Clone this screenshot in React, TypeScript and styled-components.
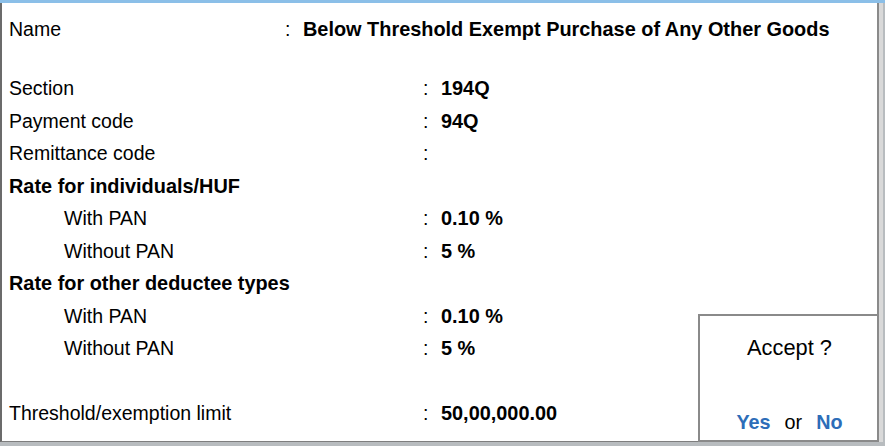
import styled, { createGlobalStyle } from "styled-components";

const GlobalStyle = createGlobalStyle`
  html, body {
    margin: 0;
    padding: 0;
    background: #b8bcbf;
  }
  body {
    font-family: "Liberation Sans", Arial, sans-serif;
    color: #000;
  }
`;

const Screen = styled.div`
  width: 885px;
  height: 446px;
  display: flex;
  flex-direction: column;
  overflow: hidden;
  background: #b8bcbf;
`;

const TitleStrip = styled.div`
  height: 3px;
  background: #8bbfe8;
  flex-shrink: 0;
`;

const Body = styled.div`
  display: flex;
  height: 439px;
`;

const Panel = styled.div`
  position: relative;
  width: 879px;
  background: #fff;
  border-left: 2px solid #6b6b6b;
  border-right: 2px solid #8a8a8a;
  border-bottom: 1px solid #7e7e7e;
  padding: 10px 0 0 7px;
  box-sizing: border-box;
`;

const ScrollEdge = styled.div`
  width: 4px;
  background: #d9d9d9;
`;

const Header = styled.div`
  margin-bottom: 27px;
`;

const Row = styled.div<{ $indent?: boolean }>`
  display: flex;
  align-items: center;
  height: 32.5px;
  font-size: 19.5px;
  padding-left: ${(p) => (p.$indent ? "55px" : "0")};
`;

const Label = styled.span<{ $width: number; $bold?: boolean }>`
  width: ${(p) => p.$width}px;
  flex-shrink: 0;
  font-weight: ${(p) => (p.$bold ? 700 : 400)};
  font-size: ${(p) => (p.$bold ? "19.9px" : "19.5px")};
`;

const Colon = styled.span`
  width: 18px;
  flex-shrink: 0;
`;

const Value = styled.span`
  font-weight: 700;
  font-size: 19.9px;
  white-space: nowrap;
`;

const Spacer = styled.div`
  height: 32.5px;
`;

const AcceptBox = styled.div`
  position: absolute;
  right: -2px;
  bottom: -1px;
  width: 181px;
  height: 128px;
  box-sizing: border-box;
  background: #fff;
  border: 2px solid #8a8a8a;
  display: flex;
  flex-direction: column;
  align-items: center;
  justify-content: space-between;
  padding: 19px 0 6px 2px;
`;

const AcceptTitle = styled.div`
  font-size: 21.8px;
`;

const Choices = styled.div`
  font-size: 19.8px;
  display: flex;
  gap: 14px;
  align-items: baseline;
`;

const Choice = styled.span`
  color: #2d6db8;
  font-weight: 700;
`;

type Line = { label: string; value?: string; indent?: boolean; heading?: boolean };

const lines: Line[] = [
  { label: "Section", value: "194Q" },
  { label: "Payment code", value: "94Q" },
  { label: "Remittance code", value: "" },
  { label: "Rate for individuals/HUF", heading: true },
  { label: "With PAN", value: "0.10 %", indent: true },
  { label: "Without PAN", value: "5 %", indent: true },
  { label: "Rate for other deductee types", heading: true },
  { label: "With PAN", value: "0.10 %", indent: true },
  { label: "Without PAN", value: "5 %", indent: true },
];

export default function App() {
  return (
    <>
      <GlobalStyle />
      <Screen>
        <TitleStrip />
        <Body>
          <Panel>
            <Header>
              <Row>
                <Label $width={276}>Name</Label>
                <Colon>:</Colon>
                <Value>Below Threshold Exempt Purchase of Any Other Goods</Value>
              </Row>
            </Header>
            {lines.map((l, i) => (
              <Row key={i} $indent={l.indent}>
                <Label $width={l.indent ? 359 : 414} $bold={l.heading}>
                  {l.label}
                </Label>
                {!l.heading && <Colon>:</Colon>}
                {!l.heading && <Value>{l.value}</Value>}
              </Row>
            ))}
            <Spacer />
            <Row>
              <Label $width={414}>Threshold/exemption limit</Label>
              <Colon>:</Colon>
              <Value>50,00,000.00</Value>
            </Row>
            <AcceptBox>
              <AcceptTitle>Accept ?</AcceptTitle>
              <Choices>
                <Choice>Yes</Choice>
                <span>or</span>
                <Choice>No</Choice>
              </Choices>
            </AcceptBox>
          </Panel>
          <ScrollEdge />
        </Body>
      </Screen>
    </>
  );
}
